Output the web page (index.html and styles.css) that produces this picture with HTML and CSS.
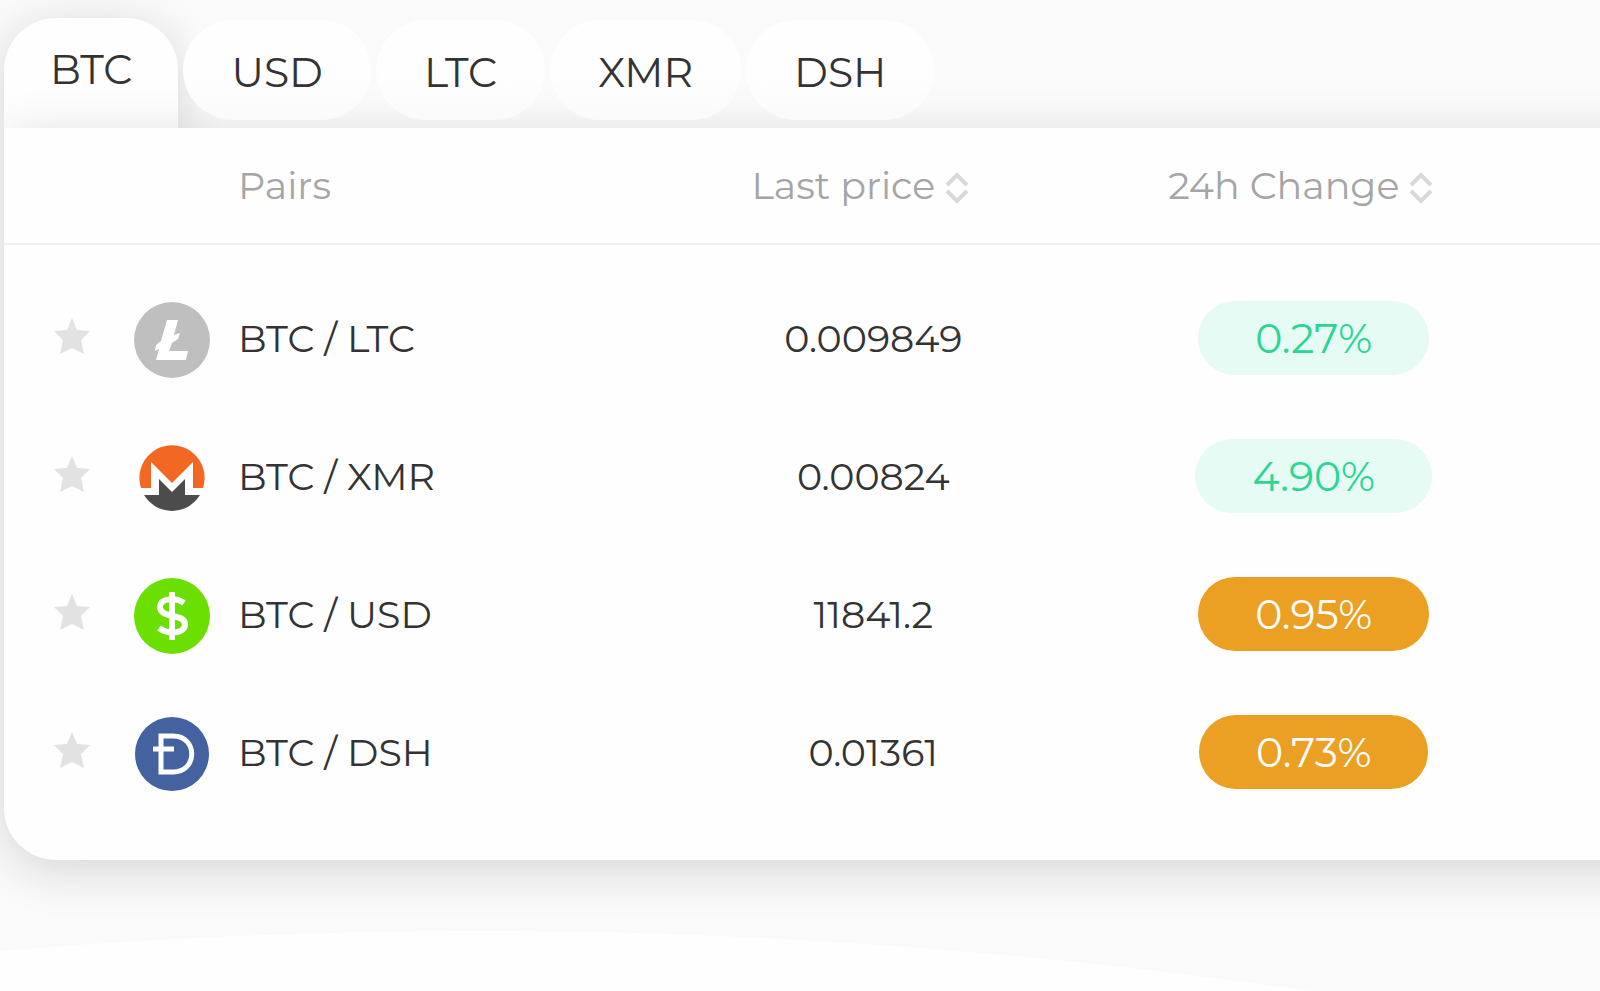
FILE: index.html
```html
<!DOCTYPE html>
<html lang="en">
<head>
    <meta charset="UTF-8">
    <meta name="viewport" content="width=device-width, initial-scale=1.0">
    <title>Markets</title>
    <link rel="stylesheet" href="styles.css">
</head>
<body>
    <!-- shared icons -->
    <svg class="sprite" aria-hidden="true">
        <symbol id="star" viewBox="0 0 36 36">
            <path d="M18 0l5 12 13 1-9 9 3 14-12-6-12 6 3-14-9-9 13-1z"/>
        </symbol>
        <symbol id="sort" viewBox="0 0 24 32">
            <path d="M2 13L12 3l10 10M2 19l10 10 10-10" fill="none" stroke="currentColor" stroke-width="4"/>
        </symbol>
    </svg>

    <main class="market">
        <nav class="tabs" role="tablist">
            <button type="button" class="tab active" role="tab" aria-selected="true">BTC</button>
            <button type="button" class="tab" role="tab">USD</button>
            <button type="button" class="tab" role="tab">LTC</button>
            <button type="button" class="tab" role="tab">XMR</button>
            <button type="button" class="tab" role="tab">DSH</button>
        </nav>

        <section class="card">
            <table class="pairs">
                <colgroup>
                    <col class="col-star">
                    <col class="col-pair">
                    <col class="col-price">
                    <col class="col-change">
                    <col class="col-end">
                </colgroup>
                <thead>
                    <tr>
                        <th></th>
                        <th class="pair-head">Pairs</th>
                        <th><button type="button" class="sort-btn">Last price <svg><use href="#sort"/></svg></button></th>
                        <th><button type="button" class="sort-btn">24h Change <svg><use href="#sort"/></svg></button></th>
                        <th></th>
                    </tr>
                </thead>
                <tbody>
                    <tr>
                        <td><button type="button" class="star" aria-label="Favorite"><svg><use href="#star"/></svg></button></td>
                        <td>
                            <div class="pair">
                                <svg class="coin" viewBox="0 0 76 76">
                                    <circle cx="38" cy="38" r="38" fill="#bfbfbf"/>
                                    <path d="M33 18h11l-4 15 6-2-2 6-6 4-3 8h19l-2 9H22l3-11-4 2 1-6 5-4z" fill="#fff"/>
                                </svg>
                                <span>BTC / LTC</span>
                            </div>
                        </td>
                        <td>0.009849</td>
                        <td><span class="change up">0.27%</span></td>
                        <td></td>
                    </tr>
                    <tr>
                        <td><button type="button" class="star" aria-label="Favorite"><svg><use href="#star"/></svg></button></td>
                        <td>
                            <div class="pair">
                                <svg class="coin" viewBox="0 0 76 76">
                                    <path d="M7 48a32.6 32.6 0 1 1 62 0H59V22L38 43 17 22v26z" fill="#f26822"/>
                                    <path d="M10 55h15V39l13 13 13-13v16h15a32.6 32.6 0 0 1-56 0z" fill="#4c4c4c"/>
                                </svg>
                                <span>BTC / XMR</span>
                            </div>
                        </td>
                        <td>0.00824</td>
                        <td><span class="change up">4.90%</span></td>
                        <td></td>
                    </tr>
                    <tr>
                        <td><button type="button" class="star" aria-label="Favorite"><svg><use href="#star"/></svg></button></td>
                        <td>
                            <div class="pair">
                                <svg class="coin" viewBox="0 0 76 76">
                                    <circle cx="38" cy="38" r="38" fill="#6bdf00"/>
                                    <path d="M50 25c-8-6-24-5-24 4 0 12 25 6 25 17 0 11-18 10-26 4M38 14v48" fill="none" stroke="#fff" stroke-width="6"/>
                                </svg>
                                <span>BTC / USD</span>
                            </div>
                        </td>
                        <td>11841.2</td>
                        <td><span class="change down">0.95%</span></td>
                        <td></td>
                    </tr>
                    <tr>
                        <td><button type="button" class="star" aria-label="Favorite"><svg><use href="#star"/></svg></button></td>
                        <td>
                            <div class="pair">
                                <svg class="coin" viewBox="0 0 76 76">
                                    <circle cx="38" cy="38" r="37" fill="#4562a0"/>
                                    <path d="M27 20h12c25 0 25 36 0 36H27zM19 33h21" fill="none" stroke="#fff" stroke-width="5"/>
                                </svg>
                                <span>BTC / DSH</span>
                            </div>
                        </td>
                        <td>0.01361</td>
                        <td><span class="change down">0.73%</span></td>
                        <td></td>
                    </tr>
                </tbody>
            </table>
        </section>
    </main>

    <footer class="wave">
        <svg viewBox="0 0 1600 60" preserveAspectRatio="none">
            <path d="M0 20Q240 0 480 0Q895 0 1310 60H0z" fill="#fefefe"/>
        </svg>
    </footer>
</body>
</html>
```
FILE: styles.css
```css
* {
    margin: 0;
    padding: 0;
    box-sizing: border-box;
}

body {
    font-family: 'Montserrat', 'Lato', sans-serif;
    font-size: 38px;
    color: #333;
    background: #fafafa;
    min-height: 100vh;
    display: flex;
    flex-direction: column;
    overflow-x: hidden;
}

button {
    font: inherit;
    color: inherit;
    background: none;
    border: none;
    cursor: pointer;
}

.sprite {
    display: none;
}

.market {
    padding: 18px 0 0 4px;
}

/* Tabs */
.tabs {
    display: flex;
    align-items: flex-start;
    gap: 5px;
    height: 110px;
}

.tab {
    height: 100px;
    margin-top: 2px;
    padding: 4px 48px 0;
    border-radius: 50px;
    font-size: 41px;
    background: linear-gradient(#fefefe 60%, #fafafa);
    position: relative;
    z-index: 1;
}

.tab.active {
    height: 110px;
    margin-top: 0;
    padding: 0 46px 8px;
    border-radius: 52px 52px 0 0;
    background: #fefefe;
    box-shadow: 0 10px 50px rgba(0, 0, 0, 0.15);
    z-index: 0;
}

/* Card, runs off the right side of the page */
.card {
    position: relative;
    margin-right: -60px;
    padding: 0 60px 39px 0;
    background: #fefefe;
    border-radius: 0 0 0 52px;
    box-shadow: 0 10px 50px rgba(0, 0, 0, 0.15);
}

.pairs {
    width: 100%;
    table-layout: fixed;
    border-collapse: collapse;
    text-align: center;
}

.col-star {
    width: 130px;
}

.col-price,
.col-change {
    width: 27.6%;
}

.col-end {
    width: 66px;
}

.pairs th {
    height: 116px;
    font-weight: 400;
    color: #a5a5a5;
    border-bottom: 2px solid #f0f0f0;
}

.pairs .pair-head {
    padding-left: 104px;
    text-align: left;
}

.sort-btn {
    display: inline-flex;
    align-items: center;
    gap: 10px;
    margin-right: 26px;
}

.sort-btn svg {
    width: 24px;
    height: 32px;
    margin-top: 4px;
    color: #d8d8d8;
}

.pairs td {
    height: 138px;
}

/* space between the header line and the first row */
.pairs tbody::before {
    content: "";
    display: table-row;
    height: 25px;
}

.star {
    display: block;
    margin: 0 0 4px 50px;
}

.star svg {
    display: block;
    width: 36px;
    height: 36px;
    fill: #e2e2e2;
}

.pair {
    display: flex;
    align-items: center;
    gap: 28px;
}

.coin {
    width: 76px;
    height: 76px;
    margin-top: 3px;
    flex: none;
}

.change {
    display: inline-block;
    padding: 0 57px;
    border-radius: 37px;
    font-size: 41px;
    line-height: 74px;
}

.change.up {
    color: #2bd592;
    background: #e6fbf4;
}

.change.down {
    color: #fefefe;
    background: #eb9f23;
}

/* Curved page bottom */
.wave {
    flex: 1;
    display: flex;
    align-items: flex-end;
}

.wave svg {
    display: block;
    width: 100%;
    height: 60px;
}
```
